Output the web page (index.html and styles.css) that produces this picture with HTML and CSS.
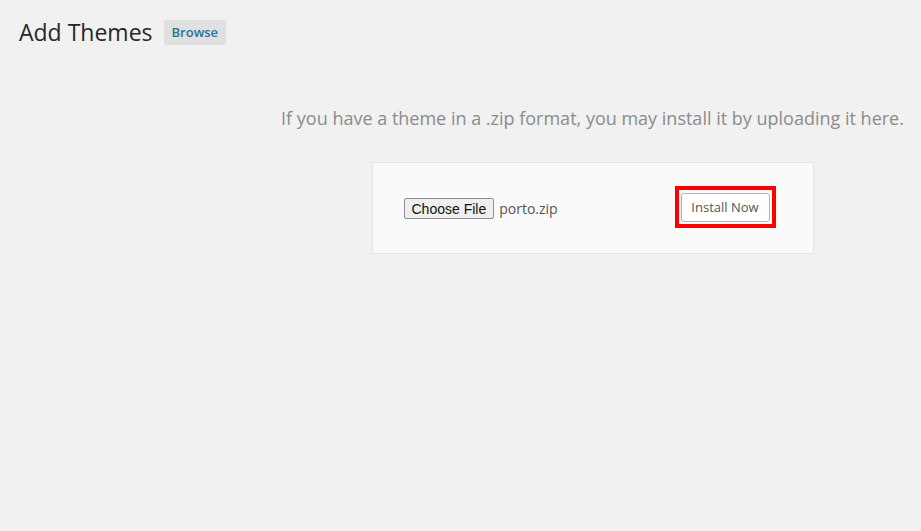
FILE: index.html
```html
<!DOCTYPE html>
<html>
<head>
<meta charset="utf-8">
<link rel="stylesheet" href="styles.css">
</head>
<body>
<div class="wrap">
  <div class="header">
    <h1 class="title">Add Themes</h1>
    <a class="browse">Browse</a>
  </div>
  <div class="upload">
    <p class="help">If you have a theme in a .zip format, you may install it by uploading it here.</p>
    <div class="box">
      <div class="file">
        <button class="choose">Choose File</button>
        <span class="fname">porto.zip</span>
      </div>
      <div class="highlight">
        <button class="install">Install Now</button>
      </div>
    </div>
  </div>
</div>
</body>
</html>
```
FILE: styles.css
```css
html, body {
  margin: 0;
  padding: 0;
  background: #f1f1f1;
  font-family: "Open Sans", sans-serif;
}
.wrap {
  padding: 19px 0 0 19px;
}
.header {
  display: flex;
  align-items: center;
  gap: 11px;
}
.title {
  margin: 0;
  font-size: 23px;
  font-weight: 400;
  line-height: 26px;
  color: #23282d;
}
.browse {
  display: block;
  background: #e0e0e0;
  color: #21759b;
  font-weight: 600;
  font-size: 13px;
  line-height: 25px;
  padding: 0 8px;
  border-radius: 2px;
  margin-top: 1px;
}
.upload {
  margin-left: 245px;
  display: flex;
  flex-direction: column;
  align-items: center;
}
.help {
  margin: 61px 0 0;
  font-size: 18px;
  line-height: 25px;
  color: #8c8c8c;
}
.box {
  box-sizing: border-box;
  margin-top: 31px;
  width: 442px;
  height: 92px;
  background: #fafafa;
  border: 1px solid #e5e5e5;
  display: flex;
  align-items: center;
  justify-content: space-between;
  padding: 0 37px 0 31px;
}
.file {
  display: flex;
  align-items: center;
  gap: 5px;
  margin-top: 1px;
}
.choose {
  font-family: "Liberation Sans", Arial, sans-serif;
  font-size: 14px;
  height: 21px;
  padding: 0 7px;
  background: #efefef;
  border: 1px solid #8f8f8f;
  border-radius: 2px;
  color: #111;
}
.fname {
  font-size: 14px;
  color: #555;
}
.highlight {
  border: 4px solid #ff0000;
  padding: 3px 2px 2px;
  margin-top: -3px;
}
.install {
  display: block;
  font-family: "Open Sans", sans-serif;
  font-size: 13px;
  height: 29px;
  width: 89px;
  padding: 0;
  background: #fff;
  border: 1px solid #b5b5b5;
  border-radius: 3px;
  color: #555;
}
```
